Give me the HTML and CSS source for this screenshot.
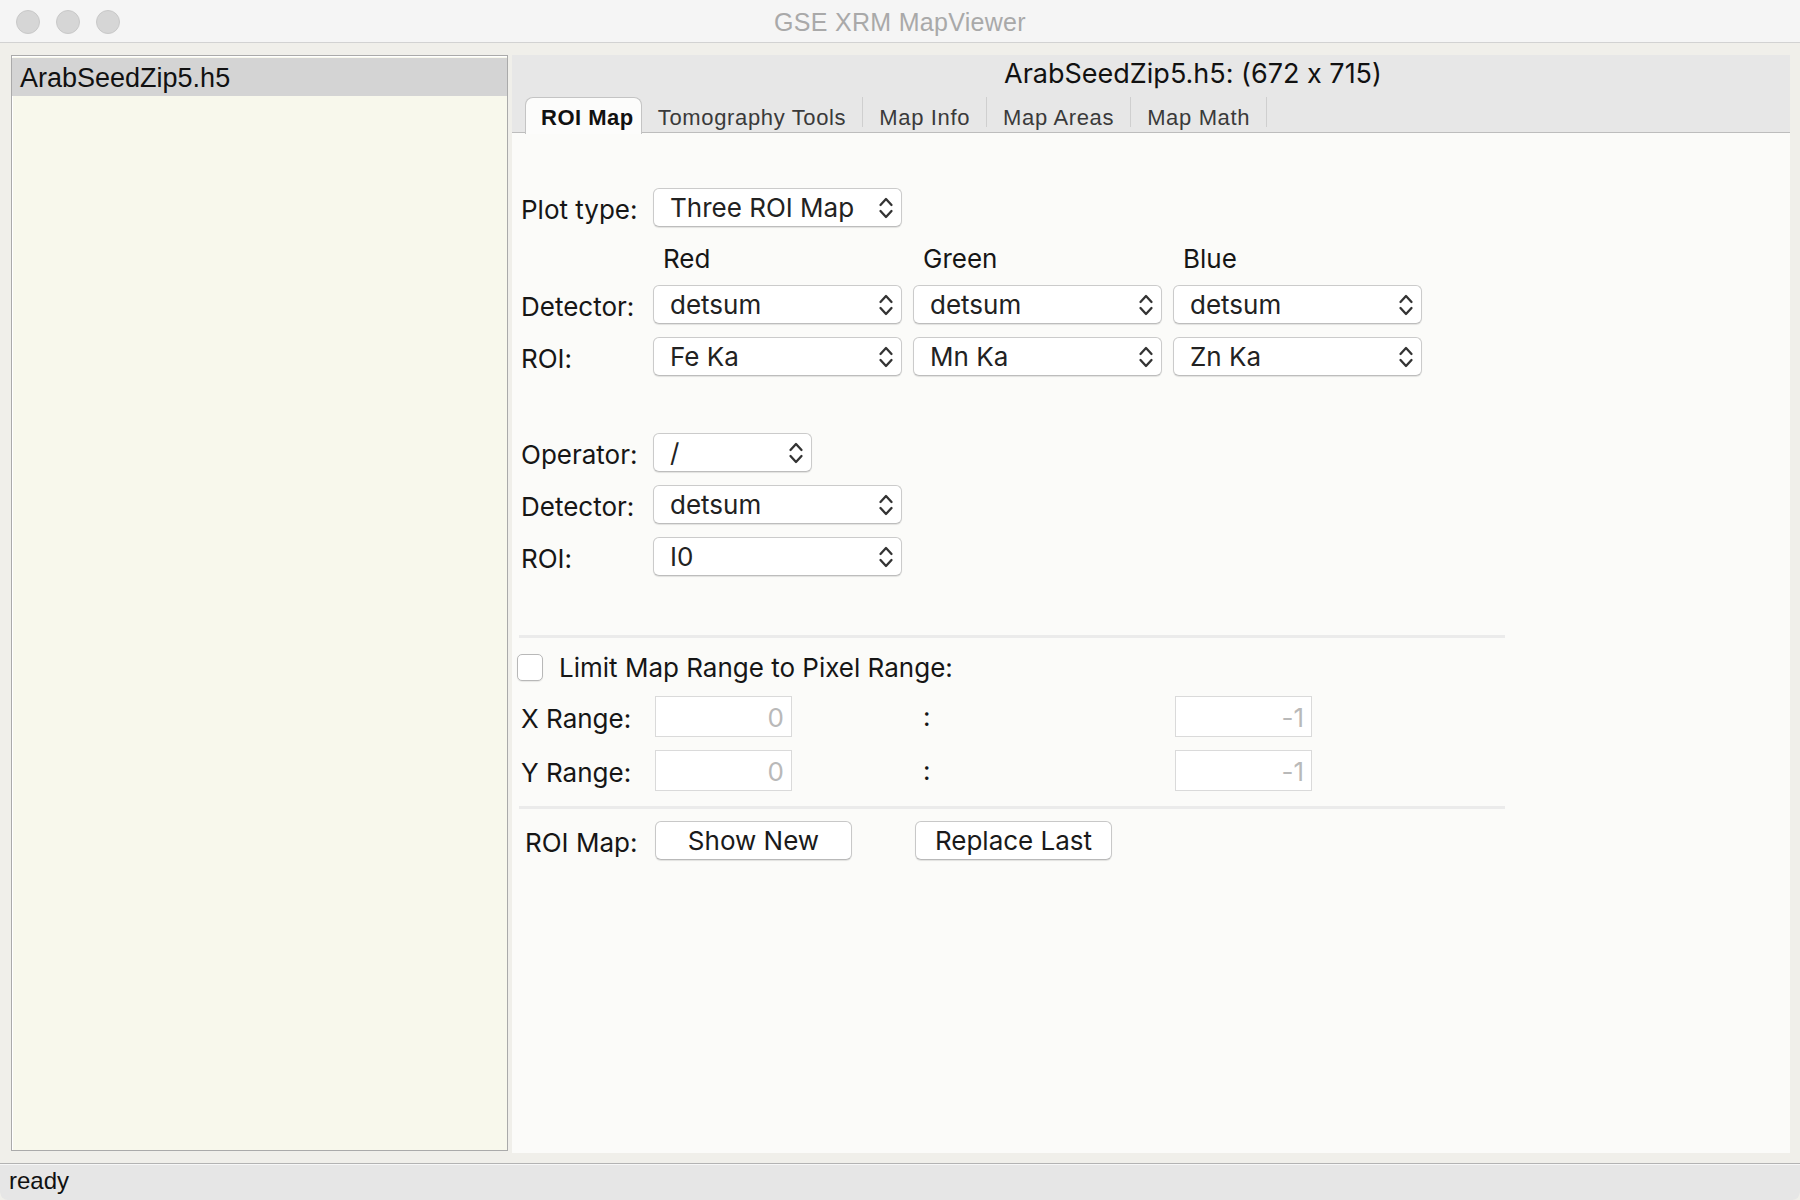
FILE: index.html
```html
<!DOCTYPE html>
<html>
<head>
<meta charset="utf-8">
<title>GSE XRM MapViewer</title>
<link rel="stylesheet" href="styles.css">
</head>
<body>
<div class="window">
  <div class="titlebar">
    <div class="lights">
      <span class="light"></span><span class="light"></span><span class="light"></span>
    </div>
    <div class="wintitle">GSE XRM MapViewer</div>
  </div>

  <div class="main">
    <div class="filelist">
      <div class="fileitem">ArabSeedZip5.h5</div>
    </div>

    <div class="right">
      <div class="header">
        <div class="maptitle">ArabSeedZip5.h5: (672 x 715)</div>
        <div class="tabs">
          <div class="tab active">ROI Map</div>
          <div class="tab sep">Tomography Tools</div>
          <div class="tab sep">Map Info</div>
          <div class="tab sep">Map Areas</div>
          <div class="tab sep">Map Math</div>
        </div>
      </div>

      <div class="content">
        <div class="row r-plot">
          <div class="lbl">Plot type:</div>
          <div class="sel"><span>Three ROI Map</span><svg class="chev" viewBox="0 0 16 26"><path d="M2.5 10 L8 4 L13.5 10 M2.5 16 L8 22 L13.5 16"/></svg></div>
        </div>
        <div class="row r-head">
          <div class="lbl"></div>
          <div class="colhead">Red</div>
          <div class="colhead">Green</div>
          <div class="colhead">Blue</div>
        </div>
        <div class="row r-det">
          <div class="lbl">Detector:</div>
          <div class="sel"><span>detsum</span><svg class="chev" viewBox="0 0 16 26"><path d="M2.5 10 L8 4 L13.5 10 M2.5 16 L8 22 L13.5 16"/></svg></div>
          <div class="sel"><span>detsum</span><svg class="chev" viewBox="0 0 16 26"><path d="M2.5 10 L8 4 L13.5 10 M2.5 16 L8 22 L13.5 16"/></svg></div>
          <div class="sel"><span>detsum</span><svg class="chev" viewBox="0 0 16 26"><path d="M2.5 10 L8 4 L13.5 10 M2.5 16 L8 22 L13.5 16"/></svg></div>
        </div>
        <div class="row r-roi">
          <div class="lbl">ROI:</div>
          <div class="sel"><span>Fe Ka</span><svg class="chev" viewBox="0 0 16 26"><path d="M2.5 10 L8 4 L13.5 10 M2.5 16 L8 22 L13.5 16"/></svg></div>
          <div class="sel"><span>Mn Ka</span><svg class="chev" viewBox="0 0 16 26"><path d="M2.5 10 L8 4 L13.5 10 M2.5 16 L8 22 L13.5 16"/></svg></div>
          <div class="sel"><span>Zn Ka</span><svg class="chev" viewBox="0 0 16 26"><path d="M2.5 10 L8 4 L13.5 10 M2.5 16 L8 22 L13.5 16"/></svg></div>
        </div>

        <div class="row r-op">
          <div class="lbl">Operator:</div>
          <div class="sel small"><span>/</span><svg class="chev" viewBox="0 0 16 26"><path d="M2.5 10 L8 4 L13.5 10 M2.5 16 L8 22 L13.5 16"/></svg></div>
        </div>
        <div class="row r-det2">
          <div class="lbl">Detector:</div>
          <div class="sel"><span>detsum</span><svg class="chev" viewBox="0 0 16 26"><path d="M2.5 10 L8 4 L13.5 10 M2.5 16 L8 22 L13.5 16"/></svg></div>
        </div>
        <div class="row r-roi2">
          <div class="lbl">ROI:</div>
          <div class="sel"><span>I0</span><svg class="chev" viewBox="0 0 16 26"><path d="M2.5 10 L8 4 L13.5 10 M2.5 16 L8 22 L13.5 16"/></svg></div>
        </div>

        <div class="sep1"></div>

        <div class="row r-check">
          <div class="checkbox"></div>
          <div class="checklbl">Limit Map Range to Pixel Range:</div>
        </div>
        <div class="row r-x">
          <div class="lbl">X Range:</div>
          <div class="cell"><div class="num">0</div></div>
          <div class="cell colon">:</div>
          <div class="cell"><div class="num">-1</div></div>
        </div>
        <div class="row r-y">
          <div class="lbl">Y Range:</div>
          <div class="cell"><div class="num">0</div></div>
          <div class="cell colon">:</div>
          <div class="cell"><div class="num">-1</div></div>
        </div>

        <div class="sep2"></div>

        <div class="row r-btn">
          <div class="lbl lbl-btn">ROI Map:</div>
          <div class="cell"><div class="btn">Show New</div></div>
          <div class="cell"><div class="btn">Replace Last</div></div>
        </div>
      </div>
    </div>
  </div>

  <div class="statusbar">ready</div>
</div>
</body>
</html>
```

FILE: styles.css
```css
html, body {
  margin: 0;
  padding: 0;
}
body {
  width: 1800px;
  height: 1200px;
  overflow: hidden;
  background: #f0efea;
  font-family: "Inter", "Liberation Sans", sans-serif;
  font-feature-settings: "calt" 0;
  color: #161616;
}
.window {
  width: 1800px;
  height: 1200px;
  display: flex;
  flex-direction: column;
}

/* title bar */
.titlebar {
  height: 42px;
  flex: 0 0 42px;
  background: #f5f5f5;
  border-bottom: 1px solid #d2d2d2;
  display: flex;
  align-items: center;
  position: relative;
}
.lights {
  display: flex;
  gap: 16px;
  padding-left: 16px;
  margin-top: 2px;
}
.light {
  width: 22px;
  height: 22px;
  border-radius: 50%;
  background: #d6d6d6;
  border: 1px solid #c9c9c9;
}
.wintitle {
  position: absolute;
  left: 0;
  right: 0;
  top: 0;
  height: 42px;
  line-height: 44px;
  text-align: center;
  font-family: "Liberation Sans", sans-serif;
  font-size: 25px;
  letter-spacing: 0.3px;
  color: #a9a9a9;
  pointer-events: none;
}

/* main area */
.main {
  flex: 1 1 auto;
  display: flex;
  padding: 12px 10px 10px 11px;
  gap: 4px;
  min-height: 0;
}
.filelist {
  width: 495px;
  flex: 0 0 495px;
  border: 1px solid #aaaaaa;
  background: #f8f8ec;
  padding: 2px 0 0 0;
  margin-bottom: 2px;
  box-shadow: inset 1px 1px 0 #ffffff;
}
.fileitem {
  height: 38px;
  background: #d4d4d4;
  font-family: "Liberation Sans", sans-serif;
  font-size: 27px;
  line-height: 40px;
  padding-left: 8px;
  color: #111;
}

.right {
  flex: 1 1 auto;
  display: flex;
  flex-direction: column;
  min-width: 0;
}
.header {
  background: #e7e7e7;
}
.maptitle {
  height: 42px;
  line-height: 38px;
  padding-left: 492px;
  font-size: 27px;
  color: #111;
}
.tabs {
  display: flex;
  height: 35px;
  border-bottom: 1px solid #bdbdbd;
  padding-left: 13px;
  font-family: "Liberation Sans", sans-serif;
  font-size: 22px;
  letter-spacing: 0.65px;
  line-height: 24px;
}
.tab {
  position: relative;
  padding: 9px 17px 0 16px;
  color: #3a3a3a;
  white-space: nowrap;
}
.tab.sep::after {
  content: "";
  position: absolute;
  right: 0;
  top: 0;
  width: 1px;
  height: 30px;
  background: #cfcfcf;
}
.tab.active {
  background: #fcfcfb;
  border: 1px solid #c4c4c4;
  border-bottom: none;
  border-radius: 8px 8px 0 0;
  padding: 8px 7px 0 15px;
  margin-bottom: -1px;
  height: 28px;
  font-weight: bold;
  letter-spacing: 0.5px;
  color: #111;
}

.content {
  flex: 1 1 auto;
  background: #fbfbf9;
  padding: 55px 0 0 9px;
  font-size: 26px;
}

.row {
  display: grid;
  grid-template-columns: 121px 249px 249px 249px;
  column-gap: 11px;
  align-items: center;
  height: 39px;
}
.lbl {
  white-space: nowrap;
  line-height: 30px;
  padding-top: 4px;
}
.r-head { margin-top: 16px; height: 32px; }
.r-det { margin-top: 10px; }
.r-roi { margin-top: 13px; }
.r-op { margin-top: 57px; }
.r-det2 { margin-top: 13px; }
.r-roi2 { margin-top: 13px; }

.colhead {
  padding-left: 10px;
  line-height: 32px;
}

.sel {
  box-sizing: border-box;
  height: 39px;
  background: #ffffff;
  border: 1px solid #cbcbcb;
  border-bottom-color: #bdbdbd;
  border-radius: 6px;
  box-shadow: 0 1px 1px rgba(0, 0, 0, 0.10);
  display: flex;
  align-items: center;
  justify-content: space-between;
  padding: 0 7px 0 16px;
  color: #222;
  white-space: nowrap;
}
.sel.small {
  width: 159px;
}
.chev {
  width: 16px;
  height: 26px;
  flex: 0 0 16px;
}
.chev path {
  fill: none;
  stroke: #333;
  stroke-width: 2.3;
  stroke-linecap: round;
  stroke-linejoin: round;
}

.sep1, .sep2 {
  height: 3px;
  width: 986px;
  margin-left: -2px;
  background: #ebebeb;
}
.sep1 { margin-top: 59px; }
.sep2 { margin-top: 15px; }

.r-check {
  display: flex;
  align-items: center;
  margin-top: 13px;
  height: 32px;
  gap: 16px;
}
.checkbox {
  width: 24px;
  height: 25px;
  margin-left: -4px;
  border: 1px solid #b8b8b8;
  border-radius: 5px;
  background: #ffffff;
  box-shadow: 0 1px 1px rgba(0, 0, 0, 0.08);
}
.checklbl {
  white-space: nowrap;
  padding-top: 1px;
}

.r-x { margin-top: 13px; height: 41px; }
.r-y { margin-top: 13px; height: 41px; }
.num {
  width: 137px;
  height: 41px;
  margin-left: 2px;
  box-sizing: border-box;
  background: #ffffff;
  border: 1px solid #dadada;
  text-align: right;
  padding-right: 7px;
  line-height: 41px;
  color: #b9b9b9;
}
.colon {
  padding-left: 10px;
}

.r-btn { margin-top: 12px; }
.lbl-btn { padding-left: 4px; }
.btn {
  width: 197px;
  height: 39px;
  margin-left: 2px;
  box-sizing: border-box;
  background: #ffffff;
  border: 1px solid #c8c8c8;
  border-bottom-color: #b9b9b9;
  border-radius: 6px;
  box-shadow: 0 1px 1px rgba(0, 0, 0, 0.10);
  text-align: center;
  line-height: 37px;
  color: #1a1a1a;
  white-space: nowrap;
}

/* status bar */
.statusbar {
  flex: 0 0 36px;
  height: 36px;
  border-top: 1px solid #b3b3b3;
  box-shadow: inset 0 1px 0 #f7f7f7;
  background: #e6e6e6;
  font-family: "Liberation Sans", sans-serif;
  font-size: 24px;
  line-height: 34px;
  padding-left: 9px;
  color: #111;
  border-radius: 0 0 8px 8px;
}
```
